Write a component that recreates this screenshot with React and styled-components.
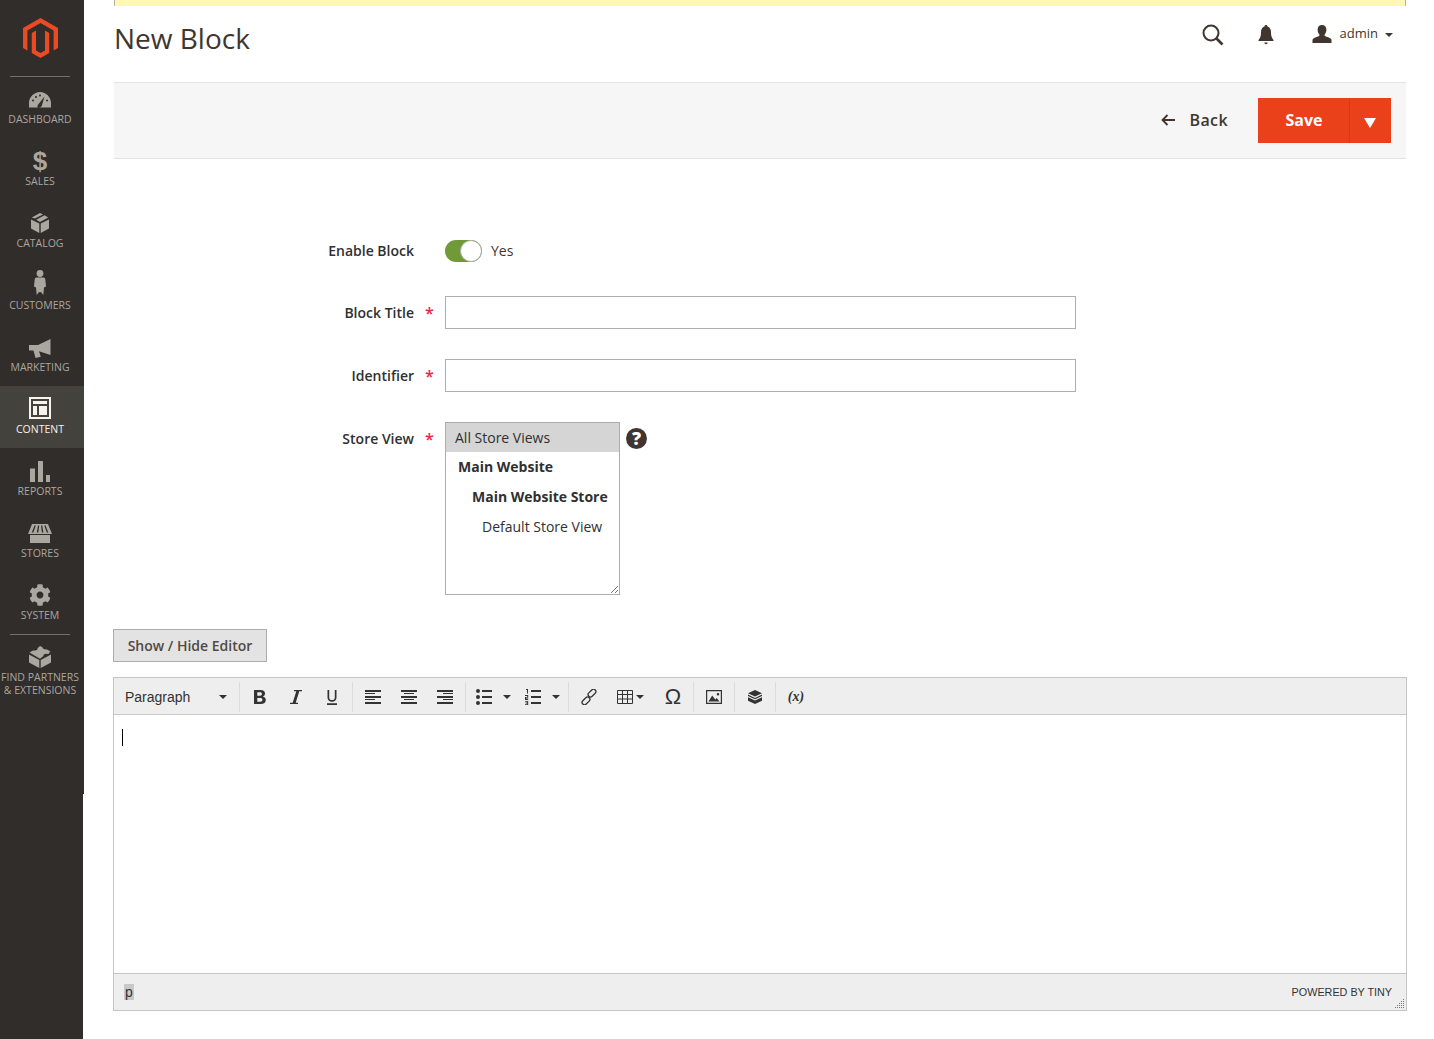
import React from "react";
import styled, { createGlobalStyle } from "styled-components";
import { FaCog } from "react-icons/fa";

const GlobalStyle = createGlobalStyle`
  html, body {
    margin: 0;
    padding: 0;
    background: #fff;
    overflow: hidden;
  }
  * {
    box-sizing: border-box;
  }
  body {
    font-family: "Open Sans", "Liberation Sans", sans-serif;
    color: #303030;
  }
`;

const Page = styled.div`
  display: flex;
  height: 1039px;
`;

const Sidebar = styled.nav`
  flex: 0 0 84px;
  height: 1039px;
  background:
    linear-gradient(#312d2a, #312d2a) 0 0 / 84px 794px no-repeat,
    linear-gradient(#312d2a, #312d2a) 0 0 / 83px 100% no-repeat;
`;

const LogoBox = styled.div`
  height: 76px;
  padding: 18px 3px 0 0;
  display: flex;
  justify-content: center;
`;

const Rule = styled.div`
  width: 60px;
  height: 1px;
  margin: 0 0 -1px 10px;
  background: #736e69;
`;

const NavItem = styled.div`
  height: ${(p) => (p.$tall ? 76 : 62)}px;
  padding-right: 4px;
  display: flex;
  flex-direction: column;
  align-items: center;
  background: ${(p) => (p.$active ? "#44423d" : "transparent")};
  color: ${(p) => (p.$active ? "#f7f3eb" : "#aaa6a0")};
`;

const NavIcon = styled.div`
  height: 34px;
  display: flex;
  align-items: flex-end;
  justify-content: center;
  flex: none;
  svg {
    display: block;
    fill: currentColor;
  }
`;

const Dollar = styled.span`
  font-family: "Liberation Sans", sans-serif;
  font-weight: 700;
  font-size: 26px;
  line-height: 26px;
  margin-bottom: -2px;
`;

const NavLabel = styled.div`
  margin-top: 3px;
  font-size: 10.5px;
  line-height: 13px;
  text-align: center;
  text-transform: uppercase;
  white-space: nowrap;
`;

const Main = styled.main`
  flex: 1;
  min-width: 0;
  padding: 0 27px 0 29px;
`;

const Notice = styled.div`
  height: 6px;
  margin: 0 1px;
  background: #fff6b8;
  border-left: 1px solid #adadad;
  border-right: 1px solid #adadad;
`;

const PageHeader = styled.header`
  height: 76px;
  display: flex;
  align-items: flex-start;
  justify-content: space-between;
`;

const Title = styled.h1`
  margin: 13px 0 0 1px;
  font-size: 28px;
  line-height: 38px;
  font-weight: 400;
  color: #41362f;
`;

const HeaderTools = styled.div`
  display: flex;
  align-items: center;
  height: 58px;
  padding-right: 14px;
  color: #41362f;
  svg {
    display: block;
  }
`;

const ToolIcon = styled.div`
  width: ${(p) => p.$w}px;
  margin-right: ${(p) => p.$after || 0}px;
  display: flex;
  justify-content: center;
`;

const UserName = styled.span`
  font-size: 13px;
  margin-left: 8px;
  margin-bottom: 5px;
`;

const SmallCaret = styled.span`
  display: inline-block;
  width: 0;
  height: 0;
  margin-left: ${(p) => p.$gap || 0}px;
  border-left: ${(p) => p.$size || 4}px solid transparent;
  border-right: ${(p) => p.$size || 4}px solid transparent;
  border-top: ${(p) => p.$drop || p.$size || 4}px solid ${(p) => p.$color || "#41362f"};
`;

const ActionBar = styled.div`
  height: 77px;
  margin: 0 1px;
  background: #f6f6f6;
  border-top: 1px solid #e3e3e3;
  border-bottom: 1px solid #e3e3e3;
  display: flex;
  align-items: center;
  justify-content: flex-end;
  padding-right: 15px;
`;

const BackLink = styled.a`
  display: flex;
  align-items: center;
  gap: 14px;
  margin: 0 30px 2px 0;
  font-size: 16px;
  font-weight: 600;
  letter-spacing: 0.4px;
  color: #41362f;
`;

const SplitButton = styled.div`
  display: flex;
  height: 45px;
  background: #eb411b;
  color: #fff;
`;

const SaveLabel = styled.div`
  width: 92px;
  display: flex;
  align-items: center;
  justify-content: center;
  padding: 0 0 2px 1px;
  font-size: 16px;
  font-weight: 700;
  border-right: 1px solid #c9401c;
`;

const SaveToggle = styled.div`
  width: 41px;
  display: flex;
  align-items: center;
  justify-content: center;
  padding: 4px 1px 0 0;
`;

const Form = styled.form`
  padding-top: 75px;
`;

const Row = styled.div`
  display: grid;
  grid-template-columns: 301px 31px 1fr;
  align-items: start;
  height: ${(p) => p.$h}px;
  margin-bottom: ${(p) => p.$gap}px;
`;

const Label = styled.label`
  font-size: 14px;
  font-weight: 600;
  line-height: 33px;
  text-align: right;
  color: #303030;
`;

const Star = styled.span`
  font-size: 16px;
  font-weight: 600;
  line-height: 35px;
  color: #e22646;
  padding-left: 11px;
`;

const ToggleWrap = styled.div`
  height: 33px;
  display: flex;
  align-items: center;
  gap: 9px;
  font-size: 14px;
  color: #41362f;
`;

const Switch = styled.div`
  width: 37px;
  height: 22px;
  border-radius: 11px;
  background: ${(p) => (p.$on ? "#6f9a37" : "#adadad")};
  display: flex;
  justify-content: ${(p) => (p.$on ? "flex-end" : "flex-start")};
`;

const Knob = styled.div`
  width: 22px;
  height: 22px;
  border-radius: 50%;
  background: #fff;
  border: 1px solid #adadad;
`;

const TextInput = styled.input`
  width: 631px;
  height: 33px;
  border: 1px solid #adadad;
  background: #fff;
  display: block;
  padding: 0 10px;
  outline: none;
`;

const StoreField = styled.div`
  display: flex;
  align-items: flex-start;
  gap: 6px;
`;

const StoreList = styled.div`
  position: relative;
  width: 175px;
  height: 173px;
  border: 1px solid #adadad;
  background: #fff;
`;

const StoreOption = styled.div`
  height: ${(p) => (p.$selected ? 29 : 30)}px;
  line-height: 29px;
  padding-left: ${(p) => p.$indent}px;
  font-size: 14px;
  font-weight: ${(p) => (p.$bold ? 700 : 400)};
  background: ${(p) => (p.$selected ? "#d5d5d5" : "transparent")};
  color: #303030;
  white-space: nowrap;
`;

const Grip = styled.svg`
  position: absolute;
  right: 0;
  bottom: 0;
`;

const HelpMark = styled.span`
  width: 21px;
  height: 21px;
  margin-top: 6px;
  border-radius: 50%;
  background: #41362f;
  color: #fff;
  font-size: 18px;
  font-weight: 800;
  line-height: 21px;
  text-align: center;
`;

const EditorToggle = styled.button`
  display: block;
  width: 154px;
  height: 33px;
  padding: 0;
  margin-bottom: 15px;
  border: 1px solid #adadad;
  background: #e3e3e3;
  color: #514943;
  font-family: "Open Sans", sans-serif;
  font-size: 14px;
  font-weight: 600;
`;

const Editor = styled.div`
  height: 334px;
  border: 1px solid #c5c5c5;
  display: flex;
  flex-direction: column;
`;

const Toolbar = styled.div`
  height: 37px;
  flex: none;
  display: flex;
  padding-top: 4px;
  background: #eee;
  border-bottom: 1px solid #c9c9c9;
`;

const ToolGroup = styled.div`
  height: 30px;
  display: flex;
  align-items: center;
  padding: 0 2px;
  border-right: 1px solid #dcdcdc;
  &:last-child {
    border-right: 0;
  }
`;

const FormatSelect = styled.div`
  width: 126px;
  height: 30px;
  border-right: 1px solid #dcdcdc;
  padding: 0 12px 0 11px;
  display: flex;
  align-items: center;
  justify-content: space-between;
  font-family: "Liberation Sans", sans-serif;
  font-size: 14px;
  color: #333;
`;

const ToolButton = styled.div`
  width: ${(p) => p.$w || 36}px;
  height: 30px;
  display: flex;
  align-items: center;
  gap: ${(p) => p.$gap || 0}px;
  justify-content: ${(p) => (p.$split ? "flex-start" : "center")};
  padding-left: ${(p) => p.$pad || 0}px;
  color: #333;
  svg {
    display: block;
    fill: currentColor;
  }
`;

const EditorBody = styled.div`
  flex: 1;
  padding: 14px 8px;
  background: #fff;
`;

const TextCaret = styled.div`
  width: 1px;
  height: 17px;
  background: #000;
`;

const StatusBar = styled.div`
  height: 37px;
  flex: none;
  position: relative;
  display: flex;
  align-items: center;
  justify-content: space-between;
  padding: 0 14px 0 10px;
  background: #eee;
  border-top: 1px solid #c5c5c5;
  font-family: "Liberation Sans", sans-serif;
  color: #333;
`;

const PathTag = styled.span`
  font-size: 14px;
  line-height: 16px;
  background: #c8c8c8;
  padding: 0 1px;
`;

const Branding = styled.span`
  font-size: 10.8px;
`;

const ResizeDots = styled.svg`
  position: absolute;
  right: 1px;
  bottom: 1px;
`;

const VarIcon = styled.span`
  font-family: "Liberation Serif", serif;
  font-style: italic;
  font-weight: 700;
  font-size: 14px;
`;

const OmegaIcon = styled.span`
  font-family: "Liberation Sans", sans-serif;
  font-size: 22px;
  line-height: 22px;
`;

const MagentoLogo = () => (
  <svg width="35" height="40" viewBox="0 0 35 40">
    <path
      fill="#ec4a23"
      d="M17.5 0 35 10v20l-4.4 2.500v-20L17.5 5 4.400 12.500v20L0 30V10zM8.750 15 13 12.500v20l4.500 2.500 4.500-2.500v-20l4.250 2.500v20L17.500 40l-8.750-5z"
    />
  </svg>
);

const navItems = [
  {
    label: "Dashboard",
    icon: (
      <svg width="22" height="16" viewBox="0 0 22 16" style={{ marginBottom: 2 }}>
        <path
          fillRule="evenodd"
          d="M11 0C5 0 0 5 0 11v4.500h22V11C22 5 17 0 11 0zM9 15.500c-.8-1-.7-2.200.2-3L15.500 4.500 12.800 13.800c-.4 1.200-1.500 1.700-2.800 1.700zM4 7.500a1 1 0 1 1 0 2 1 1 0 0 1 0-2zm3-3.500a1 1 0 1 1 0 2 1 1 0 0 1 0-2zm4-1.500a1 1 0 1 1 0 2 1 1 0 0 1 0-2zm7 5a1 1 0 1 1 0 2 1 1 0 0 1 0-2z"
        />
      </svg>
    ),
  },
  { label: "Sales", icon: <Dollar>$</Dollar> },
  {
    label: "Catalog",
    icon: (
      <svg width="18" height="20" viewBox="0 0 18 20" style={{ marginBottom: 1 }}>
        <path d="M0 6.500 8.300 10.500V20L0 15.500zM18 6.500 9.700 10.500V20L18 15.500zM9 0 12 1.500 3.800 5.500 .8 4.500zM13.500 2.300 17.200 4.500 9 9 5.300 6.800z" />
      </svg>
    ),
  },
  {
    label: "Customers",
    icon: (
      <svg width="12" height="25" viewBox="0 0 12 25" style={{ marginBottom: 1 }}>
        <circle cx="6" cy="3.500" r="3.400" />
        <path d="M2.500 7.500h7c1.200 0 1.700.8 1.800 2l.7 7-2 1-.7 7.500-2.300-3-1 .2-1-.2-2.300 3-.7-7.500-2-1 .7-7c.1-1.200.6-2 1.800-2z" />
      </svg>
    ),
  },
  {
    label: "Marketing",
    icon: (
      <svg width="22" height="19" viewBox="0 0 22 19">
        <path d="M21.500 0v16L10 12.200l1.800 5.600-5.300 1.200-2-7.400H0V6h9z" />
      </svg>
    ),
  },
  {
    label: "Content",
    active: true,
    icon: (
      <svg width="22" height="22" viewBox="0 0 22 22" style={{ marginBottom: 1 }}>
        <path
          fillRule="evenodd"
          d="M0 0h22v22H0zM2 2v18h18V2zM4 4h14v3H4zM4 9h4v9H4zM10 9h8v9h-8z"
        />
      </svg>
    ),
  },
  {
    label: "Reports",
    icon: (
      <svg width="20" height="21" viewBox="0 0 20 21">
        <path d="M0 7.500h5V21H0zM8 0h5v21H8zM16 14h4.500v7H16z" />
      </svg>
    ),
  },
  {
    label: "Stores",
    icon: (
      <svg width="24" height="19" viewBox="0 0 24 19" style={{ marginBottom: 1 }}>
        <path
          fillRule="evenodd"
          d="M4 0h16l4 10H0zM6.500 1.500 3.800 8.500h1.500l2.500-7zM10 1.500 8.800 8.500h1.500l.9-7zM13 1.500l.9 7h1.500L14.200 1.500zM16.300 1.500l2.500 7h1.500l-2.700-7zM2 11h20v8H2z"
        />
      </svg>
    ),
  },
  { label: "System", icon: <FaCog size={22} /> },
];

const PartnersIcon = () => (
  <svg width="22" height="22" viewBox="0 0 22 22">
    <path d="M0 8.500 10.300 14v8L0 16.500zM22 8.500 11.700 14v8L22 16.500zM11 0l2.500 1.300v1l2 1 2.500.2 3.500 2-1 .5v1.200l-1.500.8-2.500-.3-2 1v1.300L11 12.800 .5 6.600l3.500-2 2.500-.1 2-1v-1.300z" />
  </svg>
);

const SearchIcon = () => (
  <svg width="22" height="22" viewBox="0 0 22 22" fill="none" stroke="currentColor">
    <circle cx="9" cy="9" r="7.500" strokeWidth="2" />
    <path d="M14.500 14.500 20.500 20.500" strokeWidth="2.600" />
  </svg>
);

const BellIcon = () => (
  <svg width="16" height="20" viewBox="0 0 16 20" fill="currentColor">
    <path d="M8 0c1 0 1.500.7 1.500 1.600 2.500.8 3.500 3 3.500 5.900 0 3 .5 5 2.500 7.500v1H.5v-1C2.500 12.500 3 10.500 3 7.500c0-2.900 1-5.100 3.500-5.900C6.500.7 7 0 8 0zM6.300 17.500h3.400a1.700 1.700 0 0 1-3.400 0z" />
  </svg>
);

const UserIcon = () => (
  <svg width="20" height="18" viewBox="0 0 20 18" fill="currentColor" style={{ marginBottom: 2 }}>
    <path d="M10 0c2.800 0 4.400 2 4.400 4.800 0 2-.8 3.800-1.900 5 0 1 .5 1.500 2 2 2.500.8 4.500 1.500 5 3v3.200H.5V14.800c.5-1.500 2.500-2.200 5-3 1.500-.5 2-1 2-2-1.100-1.200-1.900-3-1.900-5C5.600 2 7.200 0 10 0z" />
  </svg>
);

const BackArrow = () => (
  <svg width="14" height="12" viewBox="0 0 14 12" fill="none" stroke="currentColor" strokeWidth="1.800">
    <path d="M14 6H2M6.500 1 1.500 6l5 5" />
  </svg>
);

const Lines = ({ rows }) => (
  <svg width="16" height="14" viewBox="0 0 16 14">
    {rows.map(([x, w], i) => (
      <rect key={i} x={x} y={i * 3} width={w} height={i % 2 ? 1 : 2} />
    ))}
  </svg>
);

const BoldIcon = () => (
  <svg width="12" height="14" viewBox="0 0 12 14">
    <path
      fillRule="evenodd"
      d="M0 0h6.500c3 0 4.500 1.300 4.500 3.500 0 1.500-.8 2.600-2.200 3 1.900.4 3 1.600 3 3.500 0 2.600-1.800 4-5 4H0zM3.300 2.300v3.400h2.700c1.300 0 1.900-.6 1.900-1.700 0-1.100-.6-1.700-1.900-1.700zM3.300 8v3.700h3c1.400 0 2.100-.7 2.100-1.900S7.700 8 6.300 8z"
    />
  </svg>
);

const ItalicIcon = () => (
  <svg width="12" height="14" viewBox="0 0 12 14">
    <path d="M4 0h8v1.200H9.300L5.700 12.800H8V14H0v-1.200h2.700L6.300 1.200H4z" />
  </svg>
);

const UnderlineIcon = () => (
  <svg width="12" height="15" viewBox="0 0 12 15">
    <path d="M1.500 0h1.700v7.500c0 1.700 1 2.600 2.800 2.600s2.800-.9 2.800-2.600V0h1.700v7.500c0 2.700-1.800 4.200-4.500 4.200s-4.500-1.500-4.500-4.200zM1 13.200h10V15H1z" />
  </svg>
);

const BulletIcon = () => (
  <svg width="16" height="16" viewBox="0 0 16 16">
    <circle cx="2" cy="2" r="2" />
    <circle cx="2" cy="8" r="2" />
    <circle cx="2" cy="14" r="2" />
    <rect x="6" y="1" width="10" height="2" />
    <rect x="6" y="7" width="10" height="2" />
    <rect x="6" y="13" width="10" height="2" />
  </svg>
);

const NumberIcon = () => (
  <svg width="16" height="16" viewBox="0 0 16 16">
    <path d="M1 0h2v4.500H2V1H1zM0 6h3.200v2.800H1v.7h2.200V11H0V8h2.200V7H0zM0 12h3.200v4H0v-.8h2.200V14.400H.6v-.8h1.600v-.8H0z" />
    <rect x="6" y="1" width="10" height="2" />
    <rect x="6" y="7" width="10" height="2" />
    <rect x="6" y="13" width="10" height="2" />
  </svg>
);

const LinkIcon = () => (
  <svg width="16" height="16" viewBox="0 0 16 16" style={{ fill: "none" }} stroke="currentColor" strokeWidth="1.300">
    <rect x="8.600" y="-0.400" width="4.800" height="9" rx="2.400" transform="rotate(45 11 4.100)" />
    <rect x="2.600" y="7.400" width="4.800" height="9" rx="2.400" transform="rotate(45 5 11.900)" />
  </svg>
);

const TableIcon = () => (
  <svg width="16" height="14" viewBox="0 0 16 14" style={{ fill: "none" }} stroke="currentColor" strokeWidth="1">
    <path d="M.5.500h15v13H.500zM.5 4.500h15M.5 9h15M5.500 1v13M10.500 1v13" />
  </svg>
);

const ImageIcon = () => (
  <svg width="16" height="14" viewBox="0 0 16 14">
    <path
      fillRule="evenodd"
      d="M0 0h16v14H0zM1.200 1.200v11.600h13.600V1.200zM2.500 11.500l3.700-6 3 4 1.500-1.500 2.800 3.500zM12 3a1.300 1.300 0 1 1 0 2.600A1.300 1.300 0 0 1 12 3z"
    />
  </svg>
);

const BlockIcon = () => (
  <svg width="14" height="14" viewBox="0 0 14 14">
    <path d="M7 0l7 3.200-7 3.300-7-3.300zM0 4.600l7 3.300 7-3.300v1.300L7 9.200 0 5.900zM0 7.200l7 3.300 7-3.300v3.500L7 14 0 10.700z" />
  </svg>
);

const App = () => {
  return (
    <Page>
      <GlobalStyle />
      <Sidebar>
        <LogoBox>
          <MagentoLogo />
        </LogoBox>
        <Rule />
        {navItems.map((item) => (
          <NavItem key={item.label} $active={item.active}>
            <NavIcon>{item.icon}</NavIcon>
            <NavLabel>{item.label}</NavLabel>
          </NavItem>
        ))}
        <Rule />
        <NavItem $tall>
          <NavIcon>
            <PartnersIcon />
          </NavIcon>
          <NavLabel>
            Find Partners
            <br />& Extensions
          </NavLabel>
        </NavItem>
      </Sidebar>
      <Main>
        <Notice />
        <PageHeader>
          <Title>New Block</Title>
          <HeaderTools>
            <ToolIcon $w={22}>
              <SearchIcon />
            </ToolIcon>
            <ToolIcon $w={84} $after={4}>
              <BellIcon />
            </ToolIcon>
            <ToolIcon $w={20}>
              <UserIcon />
            </ToolIcon>
            <UserName>admin</UserName>
            <SmallCaret $gap={7} />
          </HeaderTools>
        </PageHeader>
        <ActionBar>
          <BackLink>
            <BackArrow />
            Back
          </BackLink>
          <SplitButton>
            <SaveLabel>Save</SaveLabel>
            <SaveToggle>
              <SmallCaret $size={6} $drop={10} $color="#fff" />
            </SaveToggle>
          </SplitButton>
        </ActionBar>
        <Form>
          <Row $h={33} $gap={29}>
            <Label>Enable Block</Label>
            <span />
            <ToggleWrap>
              <Switch $on>
                <Knob />
              </Switch>
              Yes
            </ToggleWrap>
          </Row>
          <Row $h={33} $gap={30}>
            <Label>Block Title</Label>
            <Star>*</Star>
            <TextInput />
          </Row>
          <Row $h={33} $gap={30}>
            <Label>Identifier</Label>
            <Star>*</Star>
            <TextInput />
          </Row>
          <Row $h={173} $gap={34}>
            <Label>Store View</Label>
            <Star>*</Star>
            <StoreField>
              <StoreList>
                <StoreOption $indent={9} $selected>
                  All Store Views
                </StoreOption>
                <StoreOption $indent={12} $bold>
                  Main Website
                </StoreOption>
                <StoreOption $indent={26} $bold>
                  Main Website Store
                </StoreOption>
                <StoreOption $indent={36}>Default Store View</StoreOption>
                <Grip width="9" height="9" viewBox="0 0 9 9" stroke="#777" fill="none">
                  <path d="M1 8 8 1M5 8l3-3" />
                </Grip>
              </StoreList>
              <HelpMark>?</HelpMark>
            </StoreField>
          </Row>
          <EditorToggle type="button">Show / Hide Editor</EditorToggle>
          <Editor>
            <Toolbar>
              <FormatSelect>
                Paragraph
                <SmallCaret $color="#333" />
              </FormatSelect>
              <ToolGroup>
                <ToolButton>
                  <BoldIcon />
                </ToolButton>
                <ToolButton>
                  <ItalicIcon />
                </ToolButton>
                <ToolButton>
                  <UnderlineIcon />
                </ToolButton>
              </ToolGroup>
              <ToolGroup>
                <ToolButton>
                  <Lines rows={[[0, 16], [0, 10], [0, 16], [0, 10], [0, 16]]} />
                </ToolButton>
                <ToolButton>
                  <Lines rows={[[0, 16], [3, 10], [0, 16], [3, 10], [0, 16]]} />
                </ToolButton>
                <ToolButton>
                  <Lines rows={[[0, 16], [6, 10], [0, 16], [6, 10], [0, 16]]} />
                </ToolButton>
              </ToolGroup>
              <ToolGroup>
                <ToolButton $w={49} $split $pad={8} $gap={11}>
                  <BulletIcon />
                  <SmallCaret $color="#333" />
                </ToolButton>
                <ToolButton $w={49} $split $pad={8} $gap={11}>
                  <NumberIcon />
                  <SmallCaret $color="#333" />
                </ToolButton>
              </ToolGroup>
              <ToolGroup>
                <ToolButton>
                  <LinkIcon />
                </ToolButton>
                <ToolButton $w={48} $split $pad={10} $gap={3}>
                  <TableIcon />
                  <SmallCaret $color="#333" />
                </ToolButton>
                <ToolButton>
                  <OmegaIcon>Ω</OmegaIcon>
                </ToolButton>
              </ToolGroup>
              <ToolGroup>
                <ToolButton>
                  <ImageIcon />
                </ToolButton>
              </ToolGroup>
              <ToolGroup>
                <ToolButton>
                  <BlockIcon />
                </ToolButton>
              </ToolGroup>
              <ToolGroup>
                <ToolButton>
                  <VarIcon>(x)</VarIcon>
                </ToolButton>
              </ToolGroup>
            </Toolbar>
            <EditorBody>
              <TextCaret />
            </EditorBody>
            <StatusBar>
              <PathTag>p</PathTag>
              <Branding>POWERED BY TINY</Branding>
              <ResizeDots width="10" height="10" viewBox="0 0 10 10" fill="#777">
                <rect x="8" y="0" width="1" height="1" />
                <rect x="6" y="2" width="1" height="1" />
                <rect x="8" y="2" width="1" height="1" />
                <rect x="4" y="4" width="1" height="1" />
                <rect x="6" y="4" width="1" height="1" />
                <rect x="8" y="4" width="1" height="1" />
                <rect x="2" y="6" width="1" height="1" />
                <rect x="4" y="6" width="1" height="1" />
                <rect x="6" y="6" width="1" height="1" />
                <rect x="8" y="6" width="1" height="1" />
                <rect x="0" y="8" width="1" height="1" />
                <rect x="2" y="8" width="1" height="1" />
                <rect x="4" y="8" width="1" height="1" />
                <rect x="6" y="8" width="1" height="1" />
                <rect x="8" y="8" width="1" height="1" />
              </ResizeDots>
            </StatusBar>
          </Editor>
        </Form>
      </Main>
    </Page>
  );
};

export default App;
